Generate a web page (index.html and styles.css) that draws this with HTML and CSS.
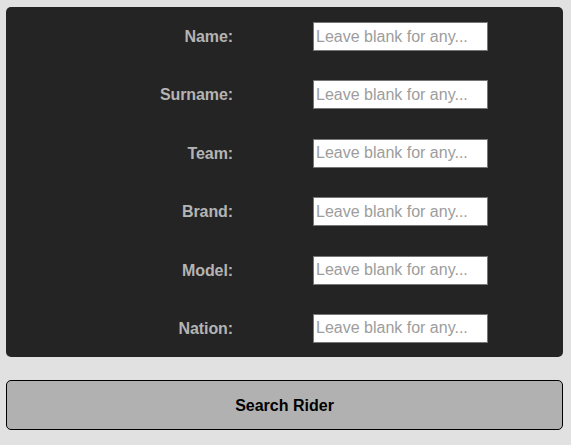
FILE: index.html
```html
<!DOCTYPE html>
<html>
<head>
<meta charset="utf-8">
<link rel="stylesheet" href="styles.css">
</head>
<body>
<form class="search">
  <div class="panel">
    <label class="lbl" for="f-name">Name:</label>
    <input class="field" id="f-name" type="text" placeholder="Leave blank for any...">
    <label class="lbl" for="f-surname">Surname:</label>
    <input class="field" id="f-surname" type="text" placeholder="Leave blank for any...">
    <label class="lbl" for="f-team">Team:</label>
    <input class="field" id="f-team" type="text" placeholder="Leave blank for any...">
    <label class="lbl" for="f-brand">Brand:</label>
    <input class="field" id="f-brand" type="text" placeholder="Leave blank for any...">
    <label class="lbl" for="f-model">Model:</label>
    <input class="field" id="f-model" type="text" placeholder="Leave blank for any...">
    <label class="lbl" for="f-nation">Nation:</label>
    <input class="field" id="f-nation" type="text" placeholder="Leave blank for any...">
  </div>
  <button class="submit" type="button">Search Rider</button>
</form>
</body>
</html>
```
FILE: styles.css
```css
html, body {
  margin: 0;
  padding: 0;
  background: #e1e1e1;
}
body {
  padding: 7px 8px 0 6px;
  font-family: "Liberation Sans", Arial, sans-serif;
}
.search {
  display: flex;
  flex-direction: column;
  width: 557px;
}
.panel {
  background: #242424;
  border-radius: 5px;
  padding: 15px 0 14px 0;
  height: 350px;
  box-sizing: border-box;
  display: grid;
  grid-template-columns: 227px 175px;
  column-gap: 80px;
  row-gap: 29.4px;
  align-items: center;
}
.lbl {
  justify-self: end;
  color: #b4b4b4;
  font-weight: bold;
  font-size: 16px;
  letter-spacing: -0.1px;
  padding-top: 1px;
}
.field {
  box-sizing: border-box;
  width: 175px;
  height: 29px;
  margin: 0;
  padding: 0 2px;
  border: 1px solid #767676;
  background: #fff;
  font-family: "Liberation Sans", Arial, sans-serif;
  font-size: 16px;
  color: #000;
  outline: none;
}
.field::placeholder {
  color: #9d9d9d;
  opacity: 1;
}
.submit {
  margin-top: 23px;
  height: 50px;
  width: 557px;
  padding: 2px 0 0 0;
  background: #b1b1b1;
  border: 1px solid #000;
  border-radius: 5px;
  font-family: "Liberation Sans", Arial, sans-serif;
  font-weight: bold;
  font-size: 16px;
  color: #000;
  cursor: pointer;
}
```
